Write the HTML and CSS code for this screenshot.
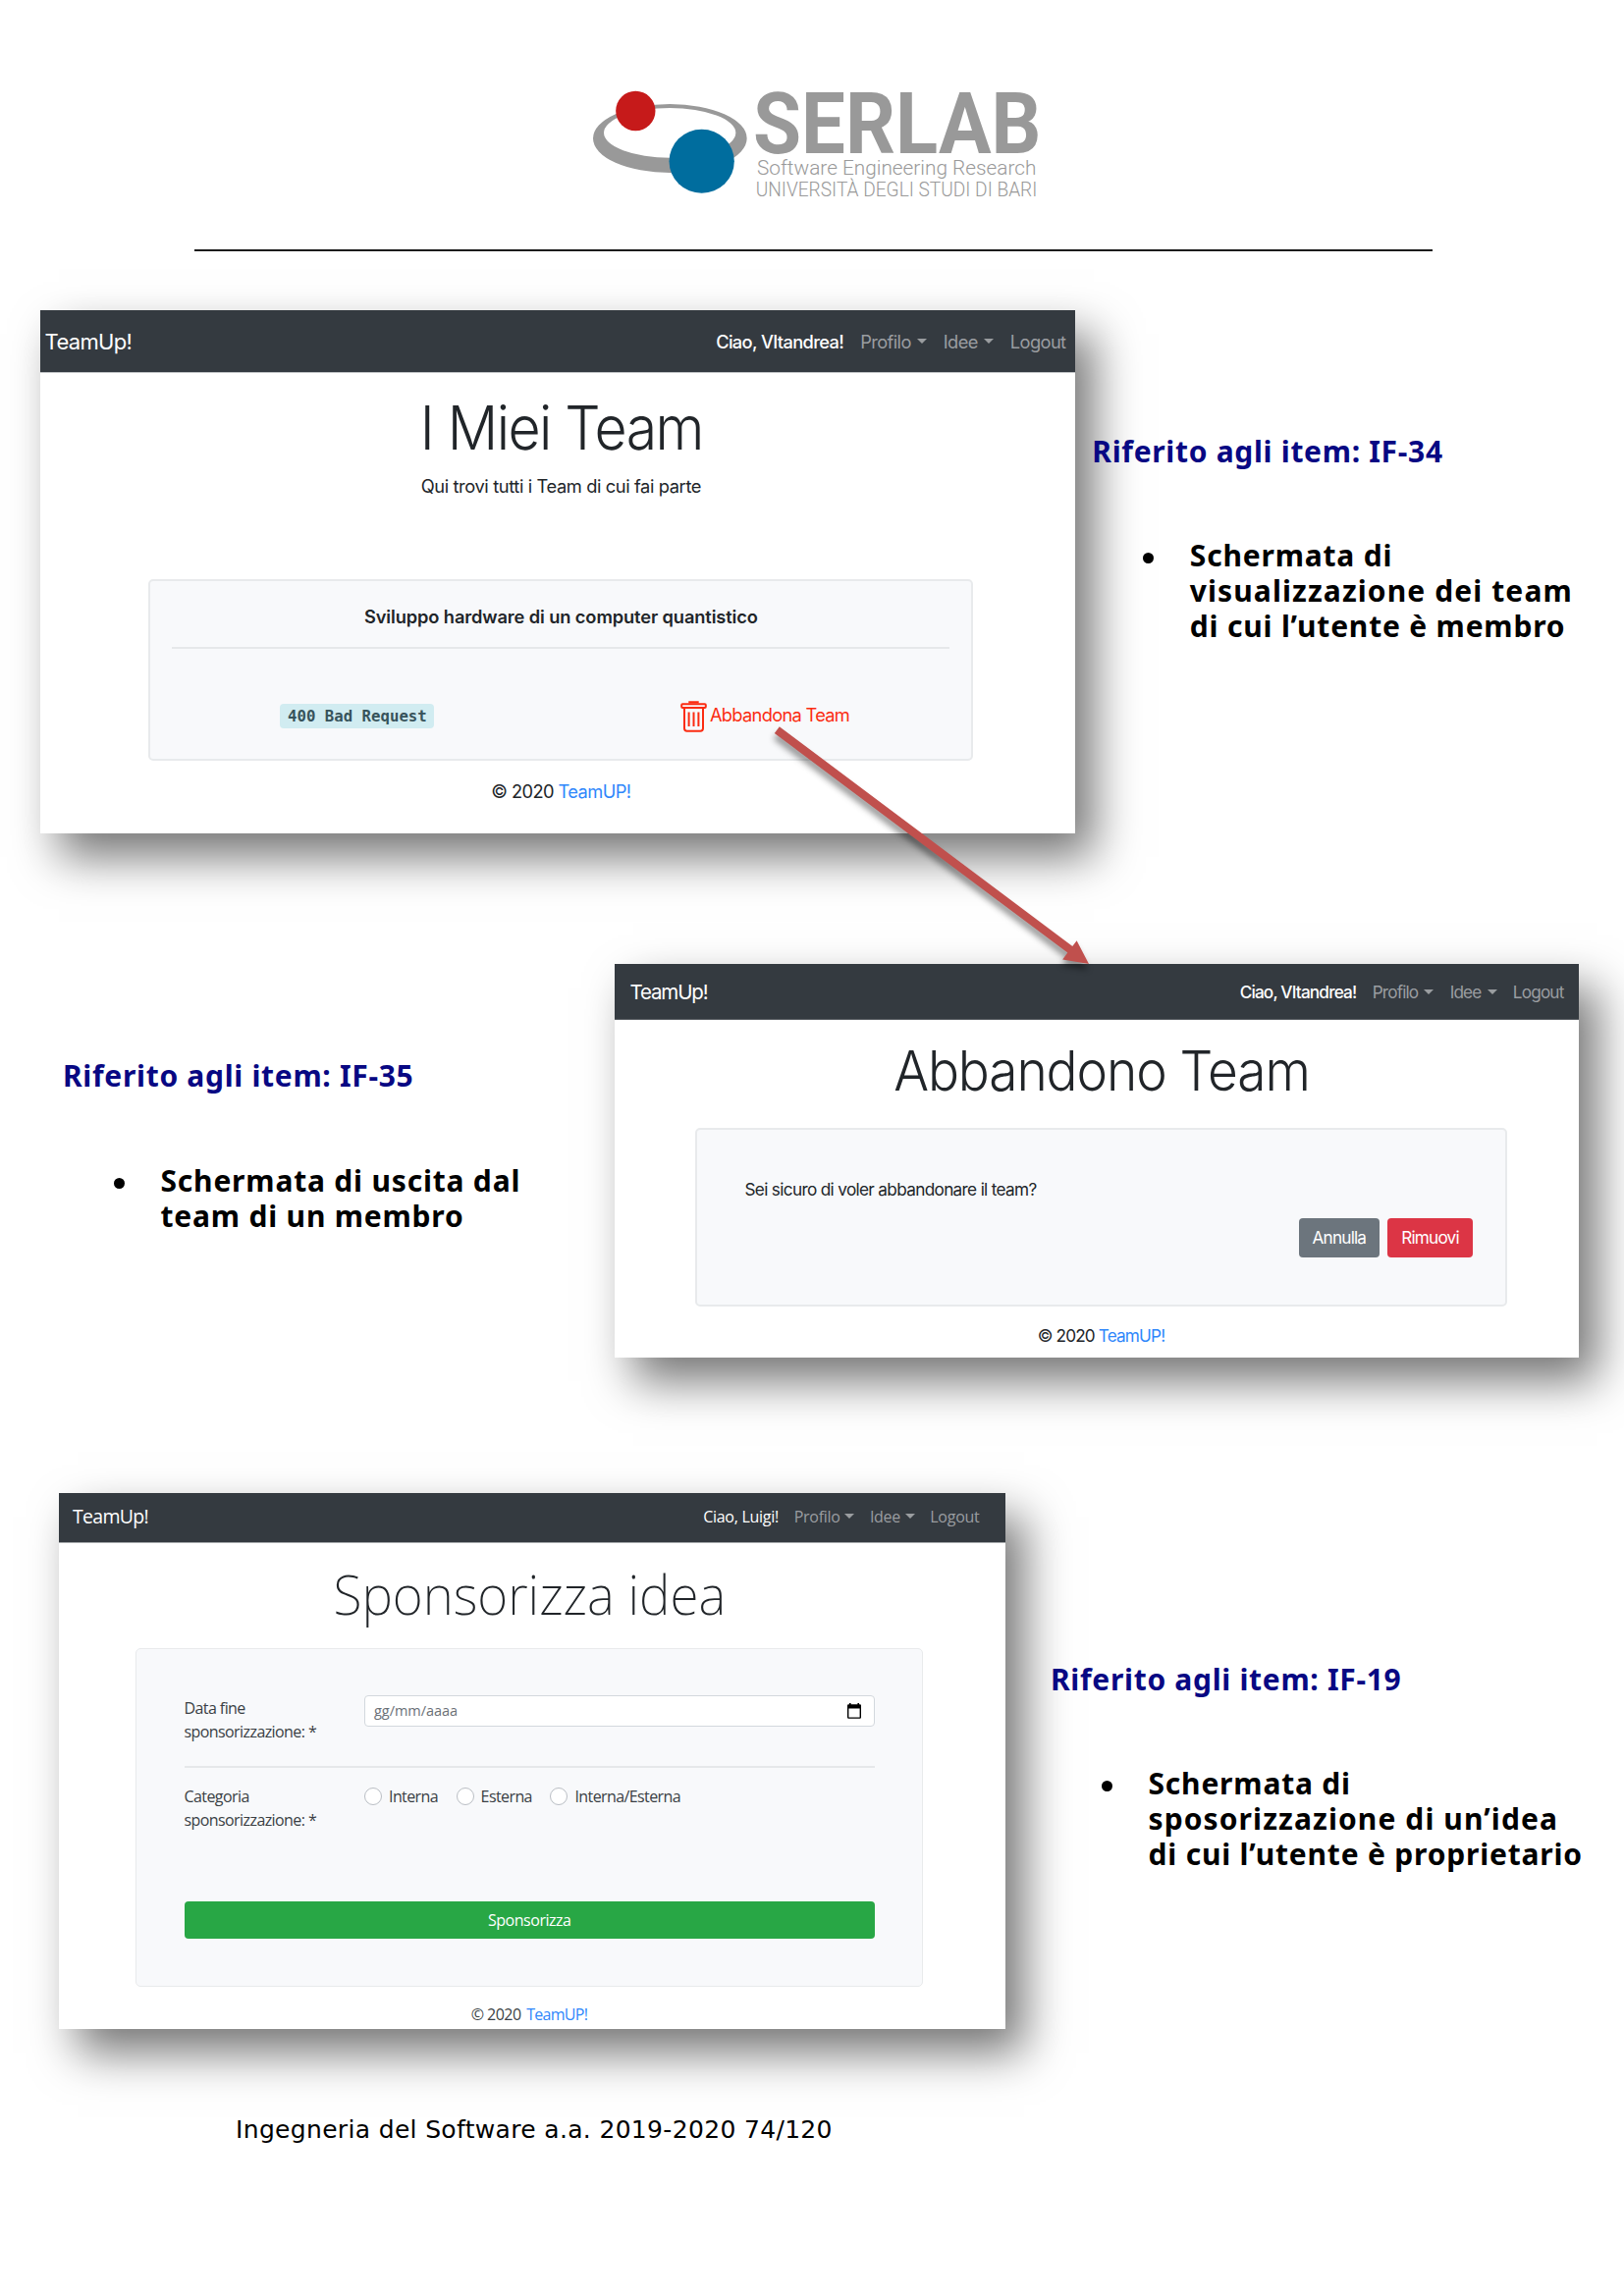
FILE: index.html
```html
<!DOCTYPE html>
<html lang="it">
<head>
<meta charset="utf-8">
<title>Ingegneria del Software</title>
<link rel="stylesheet" href="styles.css">
</head>
<body>
<header class="doc-header">
  <svg class="logo" viewBox="0 0 1440 420" role="img" aria-label="SERLAB">
    <path fill="#999" fill-rule="evenodd" d="M42 183a235 105 0 1 0 470 0a235 105 0 1 0 -470 0zM75 166a201.5 76 0 1 0 403 0a201.5 76 0 1 0 -403 0z"/>
    <circle cx="172" cy="99" r="60.500" fill="#c61a1a"/>
    <ellipse cx="374" cy="253" rx="99.500" ry="97.500" fill="#006d9e"/>
    <g fill="#999">
      <text class="logo-name" x="531" y="228" textLength="880" lengthAdjust="spacingAndGlyphs">SERLAB</text>
      <text class="logo-line" x="543" y="295" textLength="853" lengthAdjust="spacingAndGlyphs">Software Engineering Research</text>
      <text class="logo-line" x="539" y="360" textLength="860" lengthAdjust="spacingAndGlyphs">UNIVERSITÀ DEGLI STUDI DI BARI</text>
    </g>
  </svg>
</header>

<main>
  <section class="row row-teams">
    <div class="shot shot-teams">
      <nav class="nav">
        <span class="brand">TeamUp!</span>
        <span class="link active">Ciao, VItandrea!</span>
        <span class="link drop">Profilo</span>
        <span class="link drop">Idee</span>
        <span class="link">Logout</span>
      </nav>
      <div class="content">
        <h1>I Miei Team</h1>
        <p class="lead">Qui trovi tutti i Team di cui fai parte</p>
        <div class="card">
          <h2>Sviluppo hardware di un computer quantistico</h2>
          <hr>
          <div class="actions">
            <code class="badge">400 Bad Request</code>
            <span class="leave">
              <svg class="trash" viewBox="0 0 27 33" fill="none" stroke="#fb2c12" stroke-width="2">
                <rect x="1.200" y="3.200" width="24.600" height="3.800" rx="1"/>
                <path d="M9.500 2.600V1.400h8v1.200" stroke-width="2.400"/>
                <path d="M4 7.500v20.600q0 2.700 2.700 2.700h13.600q2.700 0 2.700-2.700V7.500"/>
                <path d="M8.600 11.500v14.500M13.500 11.500v14.500M18.400 11.500v14.500"/>
              </svg>
              <span>Abbandona Team</span>
            </span>
          </div>
        </div>
        <p class="copy">© 2020 <a>TeamUP!</a></p>
      </div>
    </div>
    <aside class="note">
      <h3>Riferito agli item: IF-34</h3>
      <div class="item"><i class="bullet"></i><p>Schermata di<br><span class="wide">visualizzazione dei team</span><br>di cui l’utente è membro</p></div>
    </aside>
  </section>

  <section class="row row-leave">
    <aside class="note">
      <h3>Riferito agli item: IF-35</h3>
      <div class="item"><i class="bullet"></i><p>Schermata di uscita dal<br>team di un membro</p></div>
    </aside>
    <div class="shot shot-leave">
      <nav class="nav">
        <span class="brand">TeamUp!</span>
        <span class="link active">Ciao, VItandrea!</span>
        <span class="link drop">Profilo</span>
        <span class="link drop">Idee</span>
        <span class="link">Logout</span>
      </nav>
      <div class="content">
        <h1>Abbandono Team</h1>
        <div class="card">
          <p class="question">Sei sicuro di voler abbandonare il team?</p>
          <div class="buttons">
            <span class="btn btn-cancel">Annulla</span>
            <span class="btn btn-remove">Rimuovi</span>
          </div>
        </div>
        <p class="copy">© 2020 <a>TeamUP!</a></p>
      </div>
    </div>
  </section>

  <section class="row row-sponsor">
    <div class="shot shot-sponsor">
      <nav class="nav">
        <span class="brand">TeamUp!</span>
        <span class="link active">Ciao, Luigi!</span>
        <span class="link drop">Profilo</span>
        <span class="link drop">Idee</span>
        <span class="link">Logout</span>
      </nav>
      <div class="content">
        <h1>Sponsorizza idea</h1>
        <div class="card">
          <div class="field">
            <div class="label">Data fine<br>sponsorizzazione: *</div>
            <div class="input">
              <span>gg/mm/aaaa</span>
              <svg class="calendar" viewBox="0 0 14 16">
                <path fill="#000" d="M2 0h1.600v2h-1.600zM10.400 0h1.600v2h-1.600z"/>
                <path fill="#000" fill-rule="evenodd" d="M1.200 1.300h11.600q1.200 0 1.200 1.200v12.100q0 1.200-1.200 1.200H1.200q-1.200 0-1.200-1.200V2.500q0-1.200 1.200-1.200zM1.400 5.400v9h11.200v-9z"/>
              </svg>
            </div>
          </div>
          <hr>
          <div class="field">
            <div class="label">Categoria<br>sponsorizzazione: *</div>
            <div class="radios">
              <span class="radio">Interna</span>
              <span class="radio">Esterna</span>
              <span class="radio">Interna/Esterna</span>
            </div>
          </div>
          <div class="btn-sponsor">Sponsorizza</div>
        </div>
        <p class="copy">© 2020 <a>TeamUP!</a></p>
      </div>
    </div>
    <aside class="note">
      <h3>Riferito agli item: IF-19</h3>
      <div class="item"><i class="bullet"></i><p>Schermata di<br><span class="wide">sposorizzazione di un’idea</span><br>di cui l’utente è proprietario</p></div>
    </aside>
  </section>
</main>

<footer class="doc-footer">Ingegneria del Software a.a. 2019-2020 74/120</footer>

<svg class="arrow" viewBox="0 0 360 280">
  <path fill="#c0504d" d="M23.800 20.200L322.300 243.900L326.600 238.200L339 262L312.200 257.400L317.300 250.600L18.800 26.900z"/>
</svg>
</body>
</html>
```
FILE: styles.css
```css
* { box-sizing: border-box; }

body {
  margin: 0;
  width: 1654px;
  height: 2339px;
  overflow: hidden;
  position: relative;
  background: #fff;
  color: #212529;
}

h1, h2, h3, p, hr { margin: 0; }

/* Document header and footer */
.doc-header {
  width: 1261px;
  height: 256px;
  margin-left: 198px;
  padding: 80px 0 0 392px;
  border-bottom: 2px solid #1c1c1c;
}
.logo { display: block; width: 480px; height: 140px; }
.logo-name { font: 700 262px Roboto, sans-serif; }
.logo-line { font: 300 62px Roboto, sans-serif; }

.doc-footer {
  margin: 86.500px 0 0 240px;
  font: 25px/32px "DejaVu Sans", sans-serif;
  letter-spacing: 0.330px;
  color: #000;
}

/* Rows pairing a screen with its note */
.row { display: flex; align-items: flex-start; }
.row-teams { margin-top: 60px; height: 533px; }
.row-leave { margin-top: 133px; height: 401px; }
.row-sponsor { margin-top: 138px; height: 546px; }

.note {
  position: relative;
  z-index: 1;
  font-family: "Noto Sans", sans-serif;
  font-weight: 700;
  font-size: 30px;
  line-height: 36px;
  color: #000;
  white-space: nowrap;
}
.note h3 { font: inherit; letter-spacing: 0.690px; color: #080883; }
.note p { letter-spacing: 0.800px; }
.note .wide { letter-spacing: 1.100px; }
.item { display: flex; gap: 37px; margin-top: 70.500px; padding-left: 51.500px; }
.bullet { width: 11px; height: 11px; margin-top: 15px; border-radius: 50%; background: #000; }
.row-teams .note { margin: 125.500px 0 0 17.300px; }
.row-leave .note { width: 562px; margin: 95.700px 0 0 64px; }
.row-leave .item { margin-top: 71px; }
.row-sponsor .note { margin: 171.700px 0 0 46px; }

/* Screens */
.shot {
  flex: none;
  background: #fff;
  box-shadow: 19px 24px 44px rgba(0, 0, 0, 0.54);
  font-family: Inter, sans-serif;
}
.shot-teams { width: 1054px; height: 533px; margin-left: 41px; font-size: 18.300px; }
.shot-leave { width: 982px; height: 401px; font-size: 17.200px; }
.shot-sponsor { width: 964px; height: 546px; margin-left: 60px; font-family: "Open Sans", sans-serif; font-size: 16px; }

.nav {
  display: flex;
  align-items: center;
  background: #343a40;
  color: #9a9da0;
  white-space: nowrap;
}
.brand { margin-right: auto; color: #fff; }
.active { color: #fff; }
.drop { display: flex; align-items: center; }
.drop::after {
  content: "";
  border: solid transparent;
  border-top-color: currentColor;
  border-bottom-width: 0;
}

.shot-teams .nav { height: 64px; padding: 0 9.500px 0 4.600px; gap: 17px; border-bottom: 1px solid #c3c6c8; letter-spacing: -0.600px; }
.shot-teams .brand { font-size: 22px; letter-spacing: -0.670px; }
.shot-teams .drop::after { margin-left: 6px; border-width: 5.500px 5.500px 0; }

.shot-leave .nav { height: 57px; padding: 0 15.500px 0 15.500px; gap: 16.300px; letter-spacing: -0.830px; border-bottom: 1px solid #565b60; }
.shot-leave .brand { font-size: 20.500px; letter-spacing: -1.150px; }
.shot-leave .drop::after { margin-left: 6px; border-width: 5.200px 5px 0; }

.shot-sponsor .nav { height: 51px; padding: 0 26.500px 3px 14px; gap: 15.700px; letter-spacing: -0.260px; border-bottom: 1px solid #a5a8ab; }
.shot-sponsor .brand { font-size: 19.500px; letter-spacing: -0.700px; }
.shot-sponsor .drop::after { margin-left: 4.500px; border-width: 5px 5px 0; }

.shot .active { font-weight: 500; }
.shot-teams .active { letter-spacing: -0.650px; }
.shot-sponsor .active { font-weight: 400; letter-spacing: -0.280px; }

.content { display: flex; flex-direction: column; align-items: center; }
.shot-teams .content { padding-left: 6.800px; }
.shot-leave .content { padding-left: 9px; }
.shot-sponsor .content { padding-right: 6px; }

h1 { font-weight: 350; white-space: nowrap; }
.shot-teams h1 { margin-top: 18.600px; font-size: 61.500px; line-height: 74px; letter-spacing: -1.700px; transform: scaleX(0.93); }
.shot-leave h1 { margin-top: 17.600px; font-size: 56px; line-height: 68px; letter-spacing: -1.150px; transform: scaleX(0.95); }
.shot-sponsor h1 { margin-top: 16.600px; font: 200 56px/68px "Noto Sans", sans-serif; transform: scaleX(0.95); }

.card { background: #f8f9fb; border: 2px solid #e8eaec; border-radius: 5px; }
hr { border: 0; height: 2px; background: #e6e8ea; }
.copy a { color: #2f87fb; }

/* Team list */
.lead { margin-top: 8.700px; line-height: 28px; letter-spacing: -0.390px; }
.shot-teams .card { width: 840px; height: 185px; margin-top: 80.700px; padding: 21.600px 22px 0; }
h2 { font-size: 18.300px; font-weight: 600; line-height: 28px; letter-spacing: -0.120px; text-align: center; }
.shot-teams hr { margin-top: 17.400px; }
.actions { display: flex; align-items: center; height: 33px; margin-top: 53px; padding-left: 110px; }
.badge {
  width: 157px;
  height: 25px;
  margin: 0 250.500px 2px 0;
  border-radius: 4px;
  background: #d1ecf1;
  color: #37535b;
  font: 700 15.700px/25px "DejaVu Sans Mono", monospace;
  text-align: center;
}
.leave { display: flex; align-items: center; gap: 3px; color: #fb2c12; letter-spacing: -0.700px; line-height: 28px; }
.leave span { padding-bottom: 4px; }
.trash { width: 27px; height: 33px; }
.shot-teams .copy { margin-top: 17px; line-height: 28px; letter-spacing: -0.590px; }

/* Leave confirmation */
.shot-leave .card { width: 827px; height: 182px; margin-top: 24.500px; padding: 48.200px 33px 0 48.500px; }
.question { line-height: 26px; letter-spacing: -0.670px; }
.buttons { display: flex; justify-content: flex-end; gap: 8.300px; margin-top: 15.800px; }
.btn { height: 39.500px; border-radius: 4px; color: #fff; line-height: 39.500px; text-align: center; letter-spacing: -0.800px; }
.btn-cancel { width: 81.700px; background: #6c757d; }
.btn-remove { width: 87px; background: #dc3545; }
.shot-leave .copy { margin-top: 16.500px; line-height: 26px; letter-spacing: -0.850px; }

/* Sponsor form */
.shot-sponsor .card { width: 802px; height: 345px; margin-top: 22.400px; padding: 47px 48px 0 48.500px; border-width: 1px; letter-spacing: -0.580px; color: #3a3f44; }
.field { display: grid; grid-template-columns: 183.500px 1fr; line-height: 24px; }
.label { padding-top: 1px; }
.input {
  display: flex;
  align-items: center;
  justify-content: space-between;
  height: 32px;
  padding: 0 13px 0 9px;
  border: 1px solid #d3d8dd;
  border-radius: 4px;
  background: #fff;
  color: #6a7076;
  font-size: 14.500px;
  letter-spacing: -0.040px;
}
.calendar { width: 14px; height: 16px; }
.shot-sponsor hr { margin-top: 23px; }
.shot-sponsor hr + .field { margin-top: 16px; }
.radios { display: flex; gap: 18.500px; letter-spacing: -0.590px; padding-top: 1px; }
.radio { display: flex; gap: 7px; }
.radio::before {
  content: "";
  width: 16px;
  height: 16px;
  margin-top: 3px;
  border: 1px solid #b9bec4;
  border-radius: 50%;
  background: #fff;
}
.btn-sponsor { height: 38px; margin-top: 71px; border-radius: 4px; background: #28a745; color: #fff; line-height: 38px; text-align: center; letter-spacing: -0.480px; }
.shot-sponsor .copy { margin-top: 16px; line-height: 24px; letter-spacing: -0.540px; color: #3a3f44; }
.shot-sponsor .copy a { margin-left: 2px; letter-spacing: -0.700px; }

/* Connector laid over both screens */
.arrow {
  position: absolute;
  z-index: 2;
  left: 770px;
  top: 720px;
  width: 360px;
  height: 280px;
  overflow: visible;
  filter: drop-shadow(-1px 6px 3px rgba(0, 0, 0, 0.4));
}
```
